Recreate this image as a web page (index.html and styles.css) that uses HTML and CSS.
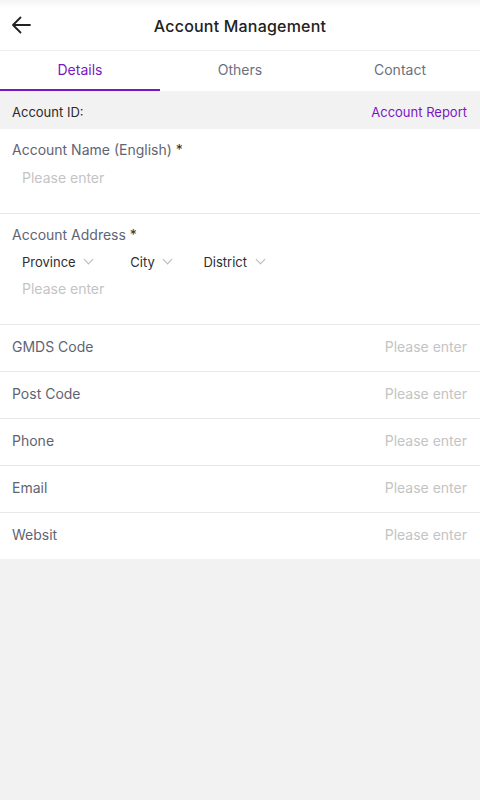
FILE: index.html
```html
<!DOCTYPE html>
<html lang="en">
<head>
    <meta charset="UTF-8">
    <meta name="viewport" content="width=device-width, initial-scale=1.0">
    <title>Account Management</title>
    <link rel="stylesheet" href="styles.css">
</head>
<body>
    <div class="nav-bar">
        <span class="back">
            <svg width="20" height="20" viewBox="0 0 20 20"><path d="M19 10H2M9.5 2.5L2 10l7.5 7.5" fill="none" stroke="#222" stroke-width="1.8" stroke-linecap="round" stroke-linejoin="round"/></svg>
        </span>
        <h1>Account Management</h1>
    </div>

    <div class="tabs">
        <div class="tab active">Details</div>
        <div class="tab">Others</div>
        <div class="tab">Contact</div>
    </div>

    <div class="id-bar">
        <span>Account ID:</span>
        <a class="report">Account Report</a>
    </div>

    <div class="form">
        <div class="block">
            <div class="label">Account Name (English) <span class="req">*</span></div>
            <div class="placeholder">Please enter</div>
        </div>

        <div class="block">
            <div class="label">Account Address <span class="req">*</span></div>
            <div class="region">
                <span class="pick">Province <i class="chev"></i></span>
                <span class="pick">City <i class="chev"></i></span>
                <span class="pick">District <i class="chev"></i></span>
            </div>
            <div class="placeholder">Please enter</div>
        </div>

        <div class="row"><span>GMDS Code</span><span class="hint">Please enter</span></div>
        <div class="row"><span>Post Code</span><span class="hint">Please enter</span></div>
        <div class="row"><span>Phone</span><span class="hint">Please enter</span></div>
        <div class="row"><span>Email</span><span class="hint">Please enter</span></div>
        <div class="row"><span>Websit</span><span class="hint">Please enter</span></div>
    </div>
</body>
</html>
```

FILE: styles.css
```css
body {
    margin: 0;
    background: #f2f2f2;
    font-family: Inter, "Noto Sans", sans-serif;
    color: #5f6473;
}
.nav-bar {
    height: 50px;
    background: linear-gradient(#f4f4f4, #fff 8px);
    border-bottom: 1px solid #ededed;
    display: flex;
    align-items: center;
    justify-content: center;
    position: relative;
}
.back {
    position: absolute;
    left: 11px;
    top: 15px;
}
.nav-bar h1 {
    margin: 0;
    font-size: 16px;
    font-weight: 500;
    color: #222;
    padding-top: 2px;
    letter-spacing: 0.2px;
}
.tabs {
    display: flex;
    background: #fff;
    height: 40px;
}
.tab {
    flex: 1;
    text-align: center;
    font-size: 14px;
    line-height: 38px;
    color: #6b7080;
    border-bottom: 2px solid transparent;
}
.tab.active {
    color: #7b16c4;
    border-bottom-color: #7b16c4;
}
.id-bar {
    height: 35px;
    display: flex;
    align-items: center;
    justify-content: space-between;
    padding: 3px 13px 0 12px;
    font-size: 13px;
    color: #2a2a2a;
}
.report {
    color: #7b16c4;
}
.form {
    background: #fff;
}
.block {
    padding: 12px 12px 0;
    border-bottom: 1px solid #e8e8e8;
}
.label {
    font-size: 14px;
    line-height: 18px;
}
.req {
    color: #333;
}
.placeholder {
    font-size: 14px;
    color: #c4c4c4;
    padding: 10px 10px 26px;
    line-height: 18px;
}
.region {
    display: flex;
    padding: 9px 10px 0;
    font-size: 13px;
    line-height: 18px;
    color: #2e2e2e;
}
.region + .placeholder {
    padding-top: 9px;
}
.pick {
    margin-right: 38px;
}
.pick:nth-child(2) {
    margin-right: 32px;
}
.chev {
    display: inline-block;
    width: 6px;
    height: 6px;
    border-right: 1px solid #b8b8b8;
    border-bottom: 1px solid #b8b8b8;
    transform: rotate(45deg);
    margin: 0 0 4px 6px;
}
.row {
    height: 42px;
    display: flex;
    align-items: center;
    justify-content: space-between;
    padding: 0 13px 4px 12px;
    font-size: 14px;
    border-bottom: 1px solid #e8e8e8;
}
.row:last-child {
    border-bottom: none;
    height: 42px;
}
.hint {
    color: #c4c4c4;
}
```
